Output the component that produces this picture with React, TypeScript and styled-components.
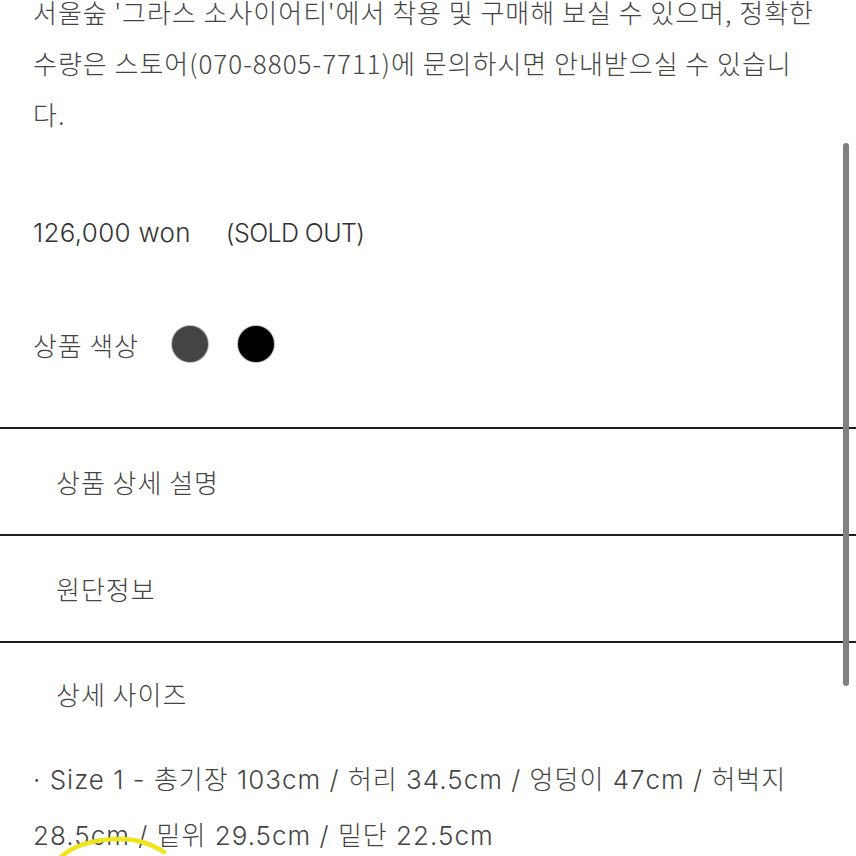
import * as React from 'react';
import styled, { createGlobalStyle } from 'styled-components';

const GlobalStyle = createGlobalStyle`
  html, body {
    margin: 0;
    padding: 0;
    background: #fff;
  }
  body {
    font-family: 'Noto Sans CJK KR', 'Noto Sans', sans-serif;
    color: #444;
  }
`;

const introLines = [
  "서울숲 '그라스 소사이어티'에서 착용 및 구매해 보실 수 있으며, 정확한",
  '수량은 스토어(070-8805-7711)에 문의하시면 안내받으실 수 있습니',
  '다.',
];

const sizeLines = [
  '· Size 1 - 총기장 103cm / 허리 34.5cm / 엉덩이 47cm / 허벅지',
  '28.5cm / 밑위 29.5cm / 밑단 22.5cm',
];

const sections = ['상품 상세 설명', '원단정보'];

const App = () => (
  <>
    <GlobalStyle />
    <Page>
      <Intro>
        {introLines.map((line) => (
          <Line key={line}>{line}</Line>
        ))}
      </Intro>

      <Price>
        <span>126,000 won</span>
        <SoldOut>(SOLD OUT)</SoldOut>
      </Price>

      <ColorRow>
        <Label>상품 색상</Label>
        <Swatch color="#444" />
        <Swatch color="#000" />
      </ColorRow>

      <Accordion>
        {sections.map((title) => (
          <Item key={title}>
            <ItemTitle>{title}</ItemTitle>
          </Item>
        ))}
        <Item>
          <ItemTitle $last>상세 사이즈</ItemTitle>
          <SizeText>
            {sizeLines.map((line) => (
              <Line key={line}>{line}</Line>
            ))}
          </SizeText>
        </Item>
      </Accordion>

      <Scrollbar />
      <Scribble viewBox="0 0 120 30">
        <path d="M4 28 C 16 16, 36 10, 60 9 C 82 8, 96 14, 108 22" />
      </Scribble>
    </Page>
  </>
);

const Page = styled.div`
  position: relative;
  width: 856px;
  height: 856px;
  overflow: hidden;
`;

const Line = styled.span`
  display: block;
  white-space: nowrap;
`;

const Intro = styled.div`
  margin-top: -14px;
  padding: 0 33px;
  font-size: 26px;
  font-weight: 300;
  line-height: 51px;
  letter-spacing: 1px;
  color: #444;
`;

const Price = styled.div`
  margin-top: 68px;
  padding: 0 33px;
  display: flex;
  align-items: baseline;
  gap: 35px;
  font-family: Inter, 'Noto Sans', sans-serif;
  font-weight: 300;
  font-size: 26px;
  line-height: 52px;
  letter-spacing: 0.3px;
  color: #333;
`;

const SoldOut = styled.span`
  font-size: 25px;
  letter-spacing: -0.6px;
`;

const ColorRow = styled.div`
  margin-top: 59px;
  padding: 0 33px;
  height: 52px;
  display: flex;
  align-items: center;
`;

const Label = styled.span`
  font-size: 26px;
  font-weight: 300;
  letter-spacing: 0.9px;
  color: #444;
  margin-right: 33px;
`;

const Swatch = styled.span<{ color: string }>`
  width: 36px;
  height: 36px;
  border-radius: 50%;
  background: ${(p) => p.color};
  box-shadow: 0 0 0 1px #bbb;
  margin-right: 30px;
`;

const Accordion = styled.div`
  margin-top: 57px;
`;

const Item = styled.div`
  border-top: 2px solid #1e1e1e;
`;

const ItemTitle = styled.div<{ $last?: boolean }>`
  height: ${(p) => (p.$last ? 100 : 105)}px;
  padding-left: 56px;
  display: flex;
  align-items: center;
  font-size: 26px;
  font-weight: 300;
  letter-spacing: 1px;
  color: #444;
`;

const SizeText = styled.div`
  margin-top: 9px;
  padding: 0 33px;
  font-family: Inter, 'Noto Sans CJK KR', sans-serif;
  font-size: 26px;
  font-weight: 300;
  line-height: 56px;
  letter-spacing: 1px;
  color: #444;
`;

const Scrollbar = styled.div`
  position: absolute;
  top: 143px;
  right: 7px;
  width: 6px;
  height: 543px;
  border-radius: 3px;
  background: #808080;
`;

const Scribble = styled.svg`
  position: absolute;
  left: 56px;
  top: 830px;
  width: 120px;
  height: 30px;
  fill: none;
  stroke: #f0e41c;
  stroke-width: 4.5;
  stroke-linecap: round;
`;

export default App;
